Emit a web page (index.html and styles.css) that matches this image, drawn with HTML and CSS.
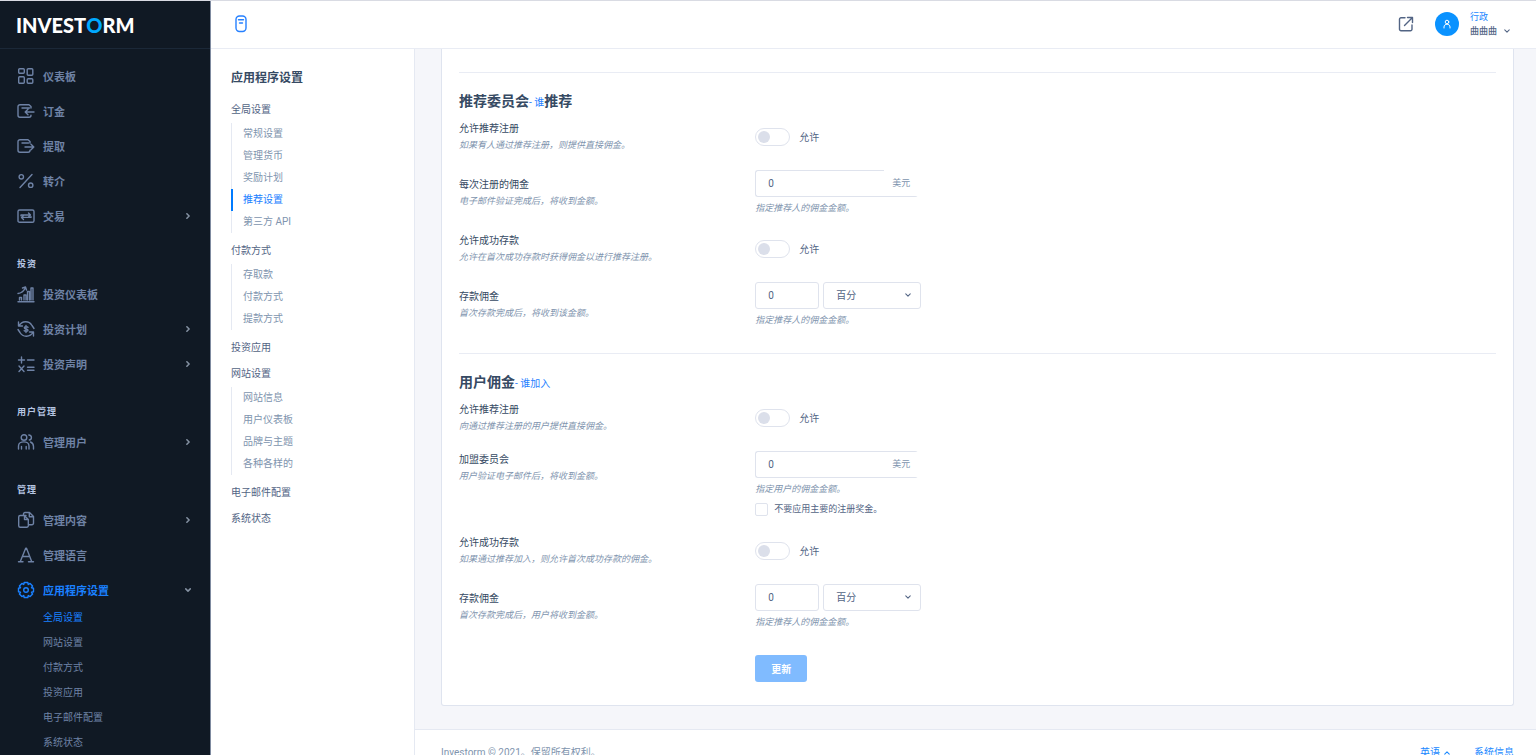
FILE: index.html
```html
<!DOCTYPE html>
<html lang="zh-CN">
<head>
    <meta charset="UTF-8">
    <meta name="viewport" content="width=device-width, initial-scale=1.0">
    <title>Investorm - 推荐设置</title>
    <link rel="stylesheet" href="styles.css">
</head>
<body>
    <div class="app">
        <aside class="sidebar">
            <a href="#" class="logo">INVEST<span>O</span>RM</a>
            <nav class="menu">
                <a href="#" class="menu-item">
                    <svg class="icon" viewBox="0 0 18 18"><rect x="1.7" y="1.7" width="5.6" height="4.6" rx="1"/><rect x="10.2" y="1.7" width="5.6" height="6.6" rx="1"/><rect x="1.7" y="9.7" width="5.6" height="6.6" rx="1"/><rect x="10.2" y="11.7" width="5.6" height="4.6" rx="1"/></svg>
                    <span>仪表板</span>
                </a>
                <a href="#" class="menu-item">
                    <svg class="icon" viewBox="0 0 18 18"><path d="M14 6V4.500L12 2.700H3a2 2 0 0 0-2 2v8.600a2 2 0 0 0 2 2h9a2 2 0 0 0 2-2M5 6h7.500M17 10H8.500M11 7.200L8.200 10l2.800 2.800"/></svg>
                    <span>订金</span>
                </a>
                <a href="#" class="menu-item">
                    <svg class="icon" viewBox="0 0 18 18"><path d="M13 6V4.500L11 2.700H3a2 2 0 0 0-2 2v8.600a2 2 0 0 0 2 2h8a2 2 0 0 0 2-2M5 6h6.500M8 10h8.500M14 7.200l2.800 2.800-2.800 2.800"/></svg>
                    <span>提取</span>
                </a>
                <a href="#" class="menu-item">
                    <svg class="icon" viewBox="0 0 18 18"><circle cx="4.300" cy="4.800" r="2.200"/><circle cx="13.700" cy="13.200" r="2.200"/><path d="M15 2.500L3 15.500"/></svg>
                    <span>转介</span>
                </a>
                <a href="#" class="menu-item">
                    <svg class="icon" viewBox="0 0 18 18"><rect x="1" y="3" width="16" height="12.300" rx="1.600"/><path d="M4 8.700V8h9.500M11.500 6l2 2-2 2M14 9.700v.7H4.500M6.500 8.400l-2 2 2 2"/></svg>
                    <span>交易</span>
                    <svg class="arrow" viewBox="0 0 8 8"><path d="M2.500 1L5.500 4l-3 3"/></svg>
                </a>

                <h6 class="menu-heading">投资</h6>
                <a href="#" class="menu-item">
                    <svg class="icon" viewBox="0 0 18 18"><path d="M1 16.700h16M2.500 15v-2.500h2V15M7 15v-5h2v5M10.500 15V6.500h2V15M14 15V3h2v12M1 8.500c3-.3 5.500-2 7.300-5.500M5.500 3L8.500 2l1 3"/></svg>
                    <span>投资仪表板</span>
                </a>
                <a href="#" class="menu-item">
                    <svg class="icon" viewBox="0 0 18 18"><path d="M1.500 2v4h4M1.800 6C5 .5 12 .3 15 5.500M16.500 16v-4h-4M16.200 12C13 17.500 6 17.700 3 12.500M1 9.500l2 3M17 8.500l-2-3M11 7.300c-.5-.9-3.700-1-3.700.5 0 1.600 3.700.8 3.700 2.400 0 1.500-3.200 1.500-3.800.4M9 5.500v7"/></svg>
                    <span>投资计划</span>
                    <svg class="arrow" viewBox="0 0 8 8"><path d="M2.500 1L5.500 4l-3 3"/></svg>
                </a>
                <a href="#" class="menu-item">
                    <svg class="icon" viewBox="0 0 18 18"><path d="M1.500 5h6M4.500 2v6M10.500 5H17M2 11l5 5.500M7 11l-5 5.500M10.500 12.300H17M10.500 15.300H17"/></svg>
                    <span>投资声明</span>
                    <svg class="arrow" viewBox="0 0 8 8"><path d="M2.500 1L5.500 4l-3 3"/></svg>
                </a>

                <h6 class="menu-heading">用户管理</h6>
                <a href="#" class="menu-item">
                    <svg class="icon" viewBox="0 0 18 18"><circle cx="7" cy="4.500" r="2.800"/><path d="M1.500 16v-3c0-5.500 10.500-5.500 10.500 0v3M4.500 16v-2.500M9.200 16v-2.500M11.800 2c3.500.3 3.300 4.500.5 5M13.500 9c2 .8 3 2.200 3 4.500V16"/></svg>
                    <span>管理用户</span>
                    <svg class="arrow" viewBox="0 0 8 8"><path d="M2.500 1L5.500 4l-3 3"/></svg>
                </a>

                <h6 class="menu-heading">管理</h6>
                <a href="#" class="menu-item">
                    <svg class="icon" viewBox="0 0 18 18"><path d="M9 4.500H3.200A1.500 1.500 0 0 0 1.700 6v8.800a1.500 1.500 0 0 0 1.500 1.500h6.600a1.500 1.500 0 0 0 1.500-1.500M6.500 4V3A1.500 1.500 0 0 1 8 1.500h4.500l4 4v6.800a1.500 1.500 0 0 1-1.500 1.500h-3.700V8.500L7.500 4.700v3.800h3.800M12.300 1.700v4h4"/></svg>
                    <span>管理内容</span>
                    <svg class="arrow" viewBox="0 0 8 8"><path d="M2.500 1L5.500 4l-3 3"/></svg>
                </a>
                <a href="#" class="menu-item">
                    <svg class="icon" viewBox="0 0 18 18"><path d="M1.500 15.800h4.500M11.500 15.800h5M3.300 15.500L8.700 2.300h.8l5.200 13.200M5.500 10.500h7"/></svg>
                    <span>管理语言</span>
                </a>
                <a href="#" class="menu-item active">
                    <svg class="icon" viewBox="0 0 18 18"><path d="M7.200 1.500h3.600l.5 2 1.800-1.100 2.500 2.500-1.100 1.800 2 .5v3.600l-2 .5 1.100 1.800-2.500 2.500-1.800-1.100-.5 2H7.200l-.5-2-1.800 1.100-2.500-2.500 1.100-1.800-2-.5V7.200l2-.5-1.100-1.800 2.500-2.500 1.800 1.100z"/><circle cx="9" cy="9" r="2.300"/></svg>
                    <span>应用程序设置</span>
                    <svg class="arrow" viewBox="0 0 8 8"><path d="M1 2.500L4 5.500l3-3"/></svg>
                </a>
                <div class="submenu">
                    <a href="#" class="active">全局设置</a>
                    <a href="#">网站设置</a>
                    <a href="#">付款方式</a>
                    <a href="#">投资应用</a>
                    <a href="#">电子邮件配置</a>
                    <a href="#">系统状态</a>
                </div>
            </nav>
        </aside>

        <div class="page">
            <header class="header">
                <button class="header-toggle" aria-label="菜单">
                    <svg viewBox="0 0 12 18"><rect x="1" y="1" width="10" height="15.500" rx="3.500"/><path d="M3.500 4.700h5M4.500 8h3"/></svg>
                </button>
                <div class="header-tools">
                    <a href="#" class="external" aria-label="打开网站">
                        <svg viewBox="0 0 16 16"><path d="M7 1.800H3A1.500 1.500 0 0 0 1.500 3.300v9.900a1.500 1.500 0 0 0 1.500 1.500h9.500a1.500 1.500 0 0 0 1.500-1.500V9M9.500 1.500H14.500V6.500M14 2L6.500 9.500"/></svg>
                    </a>
                    <button class="user">
                        <span class="avatar">
                            <svg viewBox="0 0 10 10"><circle cx="5" cy="3" r="1.800"/><path d="M2 9V8c0-3.700 6-3.700 6 0v1"/></svg>
                        </span>
                        <span class="user-info">
                            <span class="user-role">行政</span>
                            <span class="user-name">曲曲曲
                                <svg class="arrow" viewBox="0 0 8 8"><path d="M1 2.500L4 5.500l3-3"/></svg>
                            </span>
                        </span>
                    </button>
                </div>
            </header>

            <div class="body">
                <nav class="settings-nav">
                    <h5>应用程序设置</h5>
                    <a href="#" class="group">全局设置</a>
                    <div class="group-list">
                        <a href="#">常规设置</a>
                        <a href="#">管理货币</a>
                        <a href="#">奖励计划</a>
                        <a href="#" class="active">推荐设置</a>
                        <a href="#">第三方 API</a>
                    </div>
                    <a href="#" class="group">付款方式</a>
                    <div class="group-list">
                        <a href="#">存取款</a>
                        <a href="#">付款方式</a>
                        <a href="#">提款方式</a>
                    </div>
                    <a href="#" class="group">投资应用</a>
                    <a href="#" class="group">网站设置</a>
                    <div class="group-list">
                        <a href="#">网站信息</a>
                        <a href="#">用户仪表板</a>
                        <a href="#">品牌与主题</a>
                        <a href="#">各种各样的</a>
                    </div>
                    <a href="#" class="group">电子邮件配置</a>
                    <a href="#" class="group">系统状态</a>
                </nav>

                <div class="content">
                    <form class="card">
                        <hr>
                        <h2>推荐委员会<small>- 谁</small>推荐</h2>
                        <div class="rows">
                            <div class="row">
                                <div>
                                    <label for="ref-signup">允许推荐注册</label>
                                    <p class="note">如果有人通过推荐注册，则提供直接佣金。</p>
                                </div>
                                <label class="switch"><input type="checkbox" id="ref-signup"> 允许</label>
                            </div>
                            <div class="row">
                                <div>
                                    <label for="ref-bonus">每次注册的佣金</label>
                                    <p class="note">电子邮件验证完成后，将收到金额。</p>
                                </div>
                                <div>
                                    <div class="amount">
                                        <input type="text" id="ref-bonus" value="0">
                                        <span class="unit">美元</span>
                                    </div>
                                    <p class="note help">指定推荐人的佣金金额。</p>
                                </div>
                            </div>
                            <div class="row">
                                <div>
                                    <label for="ref-deposit">允许成功存款</label>
                                    <p class="note">允许在首次成功存款时获得佣金以进行推荐注册。</p>
                                </div>
                                <label class="switch"><input type="checkbox" id="ref-deposit"> 允许</label>
                            </div>
                            <div class="row">
                                <div>
                                    <label for="ref-deposit-bonus">存款佣金</label>
                                    <p class="note">首次存款完成后，将收到该金额。</p>
                                </div>
                                <div>
                                    <div class="inline">
                                        <input type="text" id="ref-deposit-bonus" value="0">
                                        <div class="select">
                                            <select aria-label="佣金类型"><option>百分</option></select>
                                            <svg class="arrow" viewBox="0 0 8 8"><path d="M1 2.500L4 5.500l3-3"/></svg>
                                        </div>
                                    </div>
                                    <p class="note help">指定推荐人的佣金金额。</p>
                                </div>
                            </div>
                        </div>

                        <hr>
                        <h2>用户佣金<small>- 谁加入</small></h2>
                        <div class="rows">
                            <div class="row">
                                <div>
                                    <label for="user-signup">允许推荐注册</label>
                                    <p class="note">向通过推荐注册的用户提供直接佣金。</p>
                                </div>
                                <label class="switch"><input type="checkbox" id="user-signup"> 允许</label>
                            </div>
                            <div class="row row-top">
                                <div>
                                    <label for="user-bonus">加盟委员会</label>
                                    <p class="note">用户验证电子邮件后，将收到金额。</p>
                                </div>
                                <div>
                                    <div class="amount amount-lined">
                                        <input type="text" id="user-bonus" value="0">
                                        <span class="unit">美元</span>
                                    </div>
                                    <p class="note help">指定用户的佣金金额。</p>
                                    <label class="check"><input type="checkbox"> 不要应用主要的注册奖金。</label>
                                </div>
                            </div>
                            <div class="row">
                                <div>
                                    <label for="user-deposit">允许成功存款</label>
                                    <p class="note">如果通过推荐加入，则允许首次成功存款的佣金。</p>
                                </div>
                                <label class="switch"><input type="checkbox" id="user-deposit"> 允许</label>
                            </div>
                            <div class="row">
                                <div>
                                    <label for="user-deposit-bonus">存款佣金</label>
                                    <p class="note">首次存款完成后，用户将收到金额。</p>
                                </div>
                                <div>
                                    <div class="inline">
                                        <input type="text" id="user-deposit-bonus" value="0">
                                        <div class="select">
                                            <select aria-label="佣金类型"><option>百分</option></select>
                                            <svg class="arrow" viewBox="0 0 8 8"><path d="M1 2.500L4 5.500l3-3"/></svg>
                                        </div>
                                    </div>
                                    <p class="note help">指定推荐人的佣金金额。</p>
                                </div>
                            </div>
                        </div>
                        <div class="row actions">
                            <button type="button" class="btn">更新</button>
                        </div>
                    </form>

                    <footer class="footer">
                        <span>Investorm © 2021。保留所有权利。</span>
                        <div class="footer-links">
                            <a href="#">英语 <svg class="arrow" viewBox="0 0 8 8"><path d="M1 5.500l3-3 3 3"/></svg></a>
                            <a href="#">系统信息</a>
                        </div>
                    </footer>
                </div>
            </div>
        </div>
    </div>
</body>
</html>
```
FILE: styles.css
```css
* {
    box-sizing: border-box;
}
body {
    margin: 0;
    font-family: Roboto, "Noto Sans CJK SC", sans-serif;
    font-size: 10px;
    color: #526484;
    background-color: #f5f6fa;
}
a {
    color: inherit;
    text-decoration: none;
}
h2, h5, h6, p {
    margin: 0;
}
button, input, select {
    font: inherit;
    color: inherit;
}
button {
    border: none;
    background: none;
    padding: 0;
    cursor: pointer;
}
svg {
    display: block;
    fill: none;
    stroke: currentColor;
    stroke-width: 1.4;
    stroke-linecap: round;
    stroke-linejoin: round;
}
.app {
    display: flex;
    height: 100vh;
    overflow: hidden;
    border-top: 1px solid #d9dbe3;
}
.arrow {
    width: 6px;
    height: 6px;
}

/* sidebar */
.sidebar {
    flex: 0 0 211px;
    background-color: #101924;
    border-right: 1px solid #7f8ba0;
    color: #6e82a5;
}
.logo {
    display: flex;
    align-items: center;
    height: 48px;
    padding-left: 16px;
    border-bottom: 1px solid #1b2838;
    font-family: Lato, sans-serif;
    font-size: 20px;
    font-weight: 900;
    color: #fff;
}
.logo span {
    color: #00a9ff;
}
.menu {
    padding: 9px 17px 0;
}
.menu-item {
    display: flex;
    align-items: center;
    height: 35px;
    font-size: 11px;
    font-weight: bold;
}
.menu-item .icon {
    width: 18px;
    height: 18px;
    margin-right: 8px;
}
.menu-item .arrow {
    margin: 0 2px 0 auto;
    stroke-width: 2;
    color: #8592a3;
}
.menu .active {
    color: #1a80ff;
}
.menu-heading {
    margin: 21px 0 2px;
    font-size: 9px;
    line-height: 20px;
    letter-spacing: 1px;
    color: #b6c6e3;
}
.submenu {
    margin-top: -2px;
    padding-left: 26px;
}
.submenu a {
    display: block;
    line-height: 25px;
}

/* header */
.page {
    flex: 1;
    display: flex;
    flex-direction: column;
    min-width: 0;
}
.header {
    display: flex;
    flex: none;
    align-items: center;
    justify-content: space-between;
    height: 48px;
    padding: 0 26px 1px 24px;
    background-color: #fff;
    border-bottom: 1px solid #e9ecf4;
}
.header-toggle svg {
    width: 12px;
    height: 18px;
    color: #2680ff;
}
.header-tools, .user {
    display: flex;
    align-items: center;
}
.header-tools {
    gap: 21px;
}
.external svg {
    width: 16px;
    height: 16px;
}
.avatar {
    display: flex;
    align-items: center;
    justify-content: center;
    width: 24px;
    height: 24px;
    margin-right: 11px;
    border-radius: 50%;
    background-color: #0a92ff;
    color: #fff;
}
.avatar svg {
    width: 10px;
    height: 10px;
    stroke-width: 1;
}
.user-info {
    text-align: left;
    font-size: 9px;
    line-height: 14px;
}
.user-role {
    display: block;
    color: #1a88ff;
}
.user-name {
    display: flex;
    align-items: center;
    gap: 7px;
    font-weight: 500;
}

/* settings navigation */
.body {
    display: flex;
    flex: 1;
    min-height: 0;
}
.settings-nav {
    flex: 0 0 204px;
    padding: 19px 20px 0;
    background-color: #fff;
    border-right: 1px solid #e5e9f2;
}
.settings-nav h5 {
    margin-bottom: 9px;
    font-size: 12px;
    line-height: 20px;
    color: #364a63;
}
.group {
    display: block;
    line-height: 26px;
}
.group-list {
    margin-bottom: 5px;
    border-left: 1px solid #e5e9f2;
}
.group-list a {
    display: block;
    padding-left: 11px;
    line-height: 22px;
    color: #8094ae;
}
.group-list .active {
    margin-left: -1px;
    padding-left: 10px;
    border-left: 2px solid #007bff;
    color: #1a80ff;
}

/* form card */
.content {
    flex: 1;
    min-width: 0;
}
.card {
    margin: 0 22px 23px 26px;
    padding: 23px 17px;
    background-color: #fff;
    border: 1px solid #dfe4ef;
    border-top: none;
    border-radius: 0 0 3px 3px;
}
hr {
    margin: 0 0 17px;
    border: none;
    border-top: 1px solid #e9ecf4;
}
h2 {
    margin-bottom: 6px;
    font-size: 14px;
    line-height: 22px;
    color: #364a63;
}
h2 small {
    font-size: 10px;
    font-weight: normal;
    color: #2680ff;
}
.rows {
    display: grid;
    gap: 16px;
}
.rows + hr {
    margin-top: 25px;
}
.row {
    display: grid;
    grid-template-columns: 2fr 5fr;
    align-items: center;
}
.row-top {
    align-items: start;
}
.row label {
    display: block;
    line-height: 17px;
    color: #364a63;
}
.note {
    font-size: 9px;
    font-style: italic;
    line-height: 17px;
    color: #8094ae;
}
.help {
    margin-top: 3px;
    line-height: 16px;
}
.row .switch, .row .check {
    display: flex;
    align-items: center;
    color: #526484;
}
.switch input {
    appearance: none;
    width: 35px;
    height: 18px;
    margin: 0 9px 0 0;
    padding: 2px;
    border: 1px solid #dfe3ed;
    border-radius: 9px;
}
.switch input::before {
    content: "";
    display: block;
    width: 12px;
    height: 12px;
    border-radius: 50%;
    background-color: #dbdfea;
}
.switch input:checked::before {
    margin-left: auto;
    background-color: #007bff;
}
.row .check {
    margin-top: 4px;
    font-size: 9px;
}
.check input {
    appearance: none;
    width: 13px;
    height: 13px;
    margin: 0 6px 0 0;
    border: 1px solid #dfe3ed;
    border-radius: 2px;
}
.check input:checked {
    background-color: #007bff;
}
input[type="text"], select {
    display: block;
    width: 64px;
    height: 27px;
    padding: 0 12px;
    border: 1px solid #dfe3ed;
    border-radius: 3px;
    background-color: #fff;
}
.amount {
    position: relative;
    width: 163px;
}
.amount input[type="text"] {
    width: 100%;
    border-right: none;
}
.unit {
    position: absolute;
    top: 0;
    right: 0;
    bottom: 1px;
    padding: 0 8px;
    font-size: 9px;
    line-height: 26px;
    background-color: #fff;
    color: #8094ae;
}
.amount-lined .unit {
    top: 1px;
    line-height: 25px;
}
.inline {
    display: flex;
    gap: 4px;
}
.select {
    position: relative;
}
select {
    appearance: none;
    width: 98px;
}
.select .arrow {
    position: absolute;
    top: 10px;
    right: 10px;
    pointer-events: none;
}
.actions {
    margin-top: 25px;
}
.btn {
    grid-column: 2;
    justify-self: start;
    width: 52px;
    height: 27px;
    border-radius: 3px;
    background-color: #80bbff;
    font-weight: bold;
    color: #fff;
}

/* footer */
.footer {
    display: flex;
    justify-content: space-between;
    padding: 13px 22px 13px 26px;
    border-top: 1px solid #e5e9f2;
    background-color: #fff;
    line-height: 20px;
    color: #8094ae;
}
.footer-links {
    display: flex;
    gap: 24px;
    color: #1a88ff;
}
.footer-links a {
    display: flex;
    align-items: center;
    gap: 4px;
}
```
